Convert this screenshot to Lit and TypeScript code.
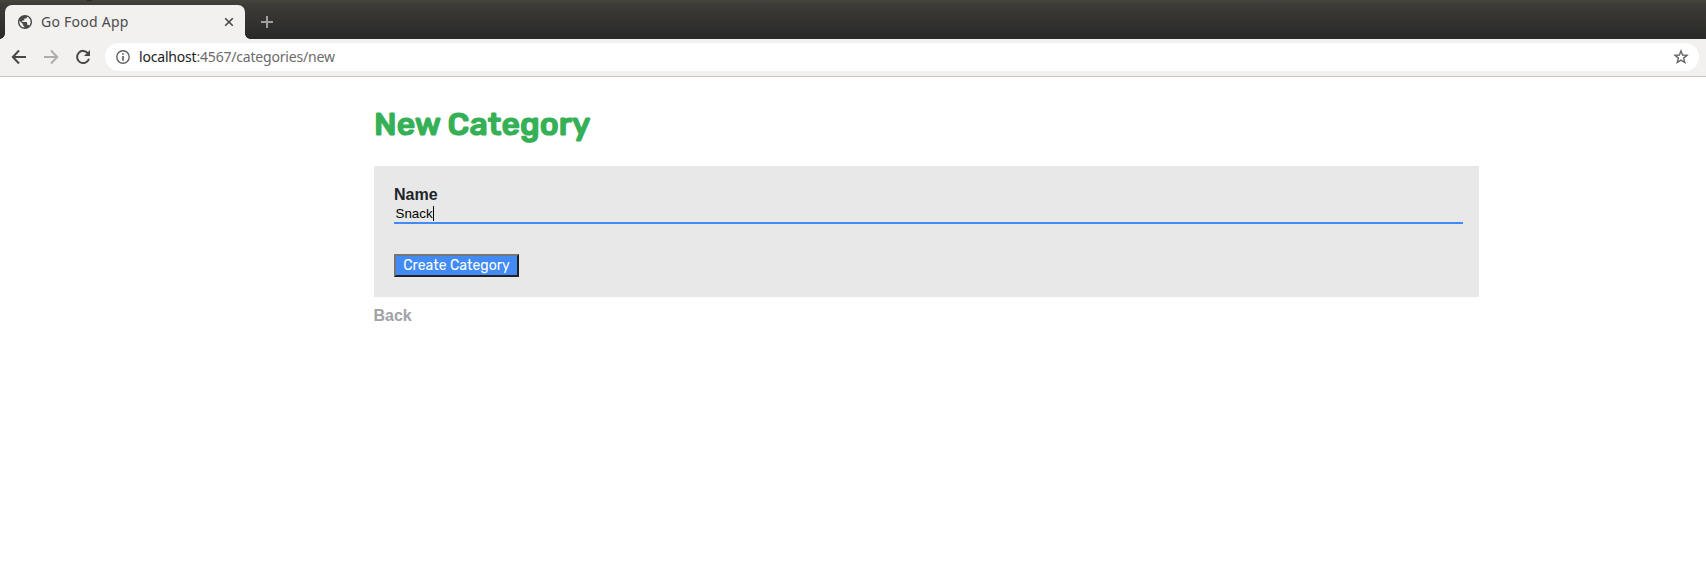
import { LitElement, html, css } from "lit";
import { customElement, property } from "lit/decorators.js";

@customElement("browser-chrome")
class BrowserChrome extends LitElement {
  @property() heading = "";
  @property() host = "";
  @property() path = "";

  static styles = css`
    :host { display: block; font-family: "Noto Sans", "Open Sans", sans-serif; }
    .strip {
      box-sizing: border-box; height: 39px; display: flex; align-items: flex-end;
      background: linear-gradient(#2b2a28, #2b2a28) 87px 0 / 5px 1px no-repeat, linear-gradient(#45433c 0, #3c3b37 5px, #292927 100%);
    }
    .edge { width: 5px; height: 5px; flex: none; }
    .edge.left { background: radial-gradient(circle at 0 0, transparent 4.5px, #f2f1f0 5px); }
    .edge.right { background: radial-gradient(circle at 100% 0, transparent 4.5px, #f2f1f0 5px); }
    .tab {
      box-sizing: border-box; width: 240px; height: 34px; padding: 0 11px 0 13px;
      display: flex; align-items: center; background: #f2f1f0; border-radius: 7px 7px 0 0;
    }
    .title { margin-left: 9px; flex: 1; font-size: 14px; line-height: 20px; color: #4c4c4c; letter-spacing: 0.25px; white-space: nowrap; }
    .plus { margin: 0 0 10px 9px; }
    .bar {
      box-sizing: border-box; height: 38px; padding: 4px 7px 5px 11px; display: flex;
      align-items: center; background: #f2f1f0; border-bottom: 1px solid #c6c5c4;
    }
    .nav { display: flex; gap: 16px; align-items: center; }
    .url {
      box-sizing: border-box; flex: 1; height: 28px; margin-left: 14px; padding: 0 10px 0 11px;
      display: flex; align-items: center; border-radius: 14px; background: #fff;
    }
    .address { flex: 1; margin-left: 9px; font-size: 14px; line-height: 20px; color: #6b6b6b; letter-spacing: -0.19px; white-space: nowrap; }
    .host { color: #222; }
    svg { display: block; flex: none; }
  `;

  render() {
    return html`
      <div class="strip">
        <span class="edge left"></span>
        <div class="tab">
          <svg width="14" height="14" viewBox="2 2 20 20" fill="#484848">
            <path d="M12 2C6.48 2 2 6.48 2 12s4.48 10 10 10 10-4.48 10-10S17.52 2 12 2zm-1 17.93c-3.95-.49-7-3.85-7-7.93 0-.62.08-1.21.21-1.79L9 15v1c0 1.1.9 2 2 2v1.93zm6.9-2.54c-.26-.81-1-1.39-1.9-1.39h-1v-3c0-.55-.45-1-1-1H8v-2h2c.55 0 1-.45 1-1V7h2c1.1 0 2-.9 2-2v-.41c2.93 1.19 5 4.06 5 7.41 0 2.08-.8 3.97-2.1 5.39z"></path>
          </svg>
          <span class="title">${this.heading}</span>
          <svg width="10" height="10" viewBox="0 0 10 10" stroke="#484848" stroke-width="1.6"><path d="M1.2 1.2 L8.8 8.8 M8.8 1.2 L1.2 8.8"></path></svg>
        </div>
        <span class="edge right"></span>
        <svg class="plus" width="16" height="14" viewBox="0 0 16 14" stroke="#a09f9e" stroke-width="2"><path d="M2 7 H14 M8 1 V13"></path></svg>
      </div>
      <div class="bar">
        <div class="nav">
          <svg width="16" height="16" viewBox="0 0 16 16" fill="none" stroke="#484848" stroke-width="2"><path d="M15 8 H2.5 M8 1.5 L1.8 8 L8 14.5"></path></svg>
          <svg width="16" height="16" viewBox="0 0 16 16" fill="none" stroke="#aeadac" stroke-width="2"><path d="M1 8 H13.5 M8 1.5 L14.2 8 L8 14.5"></path></svg>
          <svg width="16" height="16" viewBox="0 0 16 16"><path d="M13.2 4.5 A6.1 6.1 0 1 0 14 9.8" fill="none" stroke="#484848" stroke-width="2"></path><path d="M15 1 V7 H9Z" fill="#484848"></path></svg>
        </div>
        <div class="url">
          <svg width="14" height="14" viewBox="0 0 14 14"><circle cx="7" cy="7" r="6.2" fill="none" stroke="#5f6062" stroke-width="1.4"></circle><path d="M7 3.2 V4.8 M7 6 V10.8" stroke="#5f6062" stroke-width="1.7"></path></svg>
          <span class="address"><span class="host">${this.host}</span>${this.path}</span>
          <svg width="16" height="16" viewBox="0 0 16 16"><path d="M8 1.9 L9.6 6 L14 6.3 L10.6 9.1 L11.8 13.5 L8 11.1 L4.2 13.5 L5.4 9.1 L2 6.3 L6.4 6Z" fill="none" stroke="#666" stroke-width="1.4"></path></svg>
        </div>
      </div>
    `;
  }
}

@customElement("category-form")
class CategoryForm extends LitElement {
  @property() value = "";

  static styles = css`
    :host { display: block; box-sizing: border-box; height: 131px; padding: 17px 16px 20px 20px; background: #e8e8e8; font-family: "Liberation Sans", sans-serif; }
    .label { display: block; height: 22px; font-size: 16px; line-height: 24px; font-weight: 700; color: #212529; }
    .field { box-sizing: border-box; height: 19px; padding: 1px 1.5px; display: flex; align-items: center; border-bottom: 2px solid #428bf5; font-size: 13.333px; line-height: 15px; color: #000; }
    .caret { width: 1px; height: 15px; background: #000; }
    .submit {
      display: block; box-sizing: border-box; width: 125px; height: 23px; margin-top: 30px; padding: 1px 0 0;
      border: 2px solid; border-color: #767676 #212121 #212121 #767676; background: #428bf5; color: #fff;
      font: 400 14px/18px Rubik, Roboto, sans-serif; white-space: nowrap;
    }
  `;

  render() {
    return html`
      <label class="label">Name</label>
      <div class="field"><span>${this.value}</span><span class="caret"></span></div>
      <button class="submit">Create Category</button>
    `;
  }
}

@customElement("app-root")
class AppRoot extends LitElement {
  static styles = css`
    :host { display: block; height: 569px; overflow: hidden; background: #fff; }
    .page { width: 1105px; margin-left: 374px; padding-top: 28px; }
    .heading { margin: 0 0 23px; height: 38px; font: 500 32px/38px Rubik, Roboto, sans-serif; letter-spacing: 0.03px; -webkit-text-stroke: 1.2px #35b056; color: #35b056; white-space: nowrap; }
    .back { display: inline-block; margin: 7px 0 0 -0.5px; font: 700 16px/24px "Liberation Sans", sans-serif; color: #a0a3a6; text-decoration: none; }
  `;

  render() {
    return html`
      <browser-chrome heading="Go Food App" host="localhost" path=":4567/categories/new"></browser-chrome>
      <main class="page">
        <h1 class="heading">New Category</h1>
        <category-form value="Snack"></category-form>
        <a class="back" href="#">Back</a>
      </main>
    `;
  }
}
